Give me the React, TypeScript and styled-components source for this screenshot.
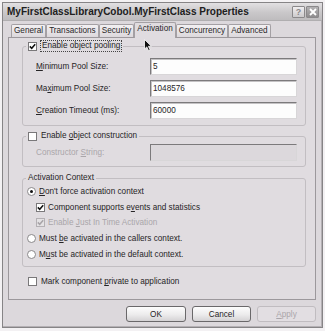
import React from "react";
import styled, { createGlobalStyle } from "styled-components";

const GlobalStyle = createGlobalStyle`
  html, body {
    margin: 0;
    padding: 0;
    background: #f3f1f3;
  }
  body {
    font-family: "Liberation Sans", Arial, sans-serif;
    font-size: 8.2px;
    color: #262426;
  }
`;

const Window = styled.div`
  position: relative;
  box-sizing: border-box;
  margin: 2px 0 0 2px;
  width: 321px;
  height: 326px;
  background: #dcd8dc;
  border: 1px solid #868486;
  box-shadow: inset -1px -1px 0 #b4b0b4;
  display: flex;
  flex-direction: column;
`;

const TitleBar = styled.div`
  height: 18px;
  flex: none;
  display: flex;
  align-items: center;
  justify-content: space-between;
  padding: 0 3px 0 4px;
  background: linear-gradient(#e2e0e2, #cac8ca 55%, #bebcbe);
  border-bottom: 1px solid #b0aeb0;
  box-sizing: border-box;
`;

const Title = styled.span`
  font-size: 10px;
  font-weight: bold;
  color: #202020;
`;

const TitleButtons = styled.div`
  display: flex;
  gap: 1px;
`;

const TitleButton = styled.div<{ $close?: boolean }>`
  width: 13px;
  height: 12px;
  box-sizing: border-box;
  border: 1px solid #8a888a;
  border-radius: 1px;
  background: ${(p) =>
    p.$close ? "linear-gradient(#b4b2b4, #8e8c8e)" : "linear-gradient(#f0eef0, #cccacc)"};
  display: flex;
  align-items: center;
  justify-content: center;
  font-size: 9px;
  font-weight: bold;
  color: #8a888a;
`;

const Body = styled.div`
  flex: 1;
  display: flex;
  flex-direction: column;
  padding: 1px 6px 0 5px;
`;

const TabStrip = styled.div`
  position: relative;
  z-index: 1;
  height: 16px;
  margin-bottom: -1px;
  padding-left: 3px;
  display: flex;
  align-items: flex-start;
`;

const Tab = styled.div<{ $active?: boolean }>`
  box-sizing: border-box;
  height: ${(p) => (p.$active ? "16px" : "13px")};
  margin-top: ${(p) => (p.$active ? "0" : "2px")};
  padding: 0 2px;
  line-height: 12px;
  border: 1px solid #a4a0a4;
  border-bottom: none;
  border-radius: 2px 2px 0 0;
  background: ${(p) => (p.$active ? "#e0dce0" : "linear-gradient(#f2f0f2, #dcd8dc)")};
  color: #2a282a;
  white-space: nowrap;
`;

const Panel = styled.div`
  box-sizing: border-box;
  height: 263px;
  border: 1px solid #9c989c;
  background: #e0dce0;
  padding: 2px 9px 0 13px;
  display: flex;
  flex-direction: column;
`;

const Group = styled.fieldset<{ $top: number }>`
  margin: ${(p) => p.$top}px 0 0 0;
  padding: 0;
  min-width: 0;
  border: 1px solid #c2bec2;
  border-radius: 3px;
`;

const Legend = styled.legend`
  display: flex;
  align-items: center;
  gap: 4px;
  height: 12px;
  margin-left: 3px;
  padding: 0 2px;
  line-height: 12px;
`;

const FieldGrid = styled.div<{ $pt: number; $pb: number }>`
  display: grid;
  grid-template-columns: 114px 147px;
  grid-auto-rows: 17px;
  row-gap: 5px;
  align-items: center;
  padding: ${(p) => p.$pt}px 8px ${(p) => p.$pb}px 13px;
`;

const FieldLabel = styled.span<{ $disabled?: boolean }>`
  color: ${(p) => (p.$disabled ? "#aaa6aa" : "#262426")};
`;

const TextBox = styled.div<{ $disabled?: boolean }>`
  box-sizing: border-box;
  height: 17px;
  padding: 1px 2px;
  line-height: 13px;
  background: ${(p) => (p.$disabled ? "#dcd8dc" : "#fdfdfd")};
  border: 1px solid;
  border-color: #7c7a7c #d8d6d8 #d8d6d8 #7c7a7c;
  box-shadow: ${(p) => (p.$disabled ? "none" : "inset 1px 1px 0 #c4c2c4")};
`;

const Options = styled.div`
  display: flex;
  flex-direction: column;
  padding: 0 0 4px 4px;
`;

const OptionRow = styled.div<{ $indent?: boolean; $disabled?: boolean }>`
  height: 15.6px;
  display: flex;
  align-items: center;
  gap: 3px;
  padding-left: ${(p) => (p.$indent ? "9px" : "0")};
  color: ${(p) => (p.$disabled ? "#aaa6aa" : "#262426")};
`;

const Box = styled.span<{ $disabled?: boolean }>`
  box-sizing: border-box;
  width: 9px;
  height: 9px;
  flex: none;
  border: 1px solid ${(p) => (p.$disabled ? "#b4b0b4" : "#7a787a")};
  background: ${(p) => (p.$disabled ? "#e4e2e4" : "#ffffff")};
  display: flex;
  align-items: center;
  justify-content: center;
`;

const Radio = styled.span<{ $on?: boolean }>`
  box-sizing: border-box;
  width: 9px;
  height: 9px;
  flex: none;
  border-radius: 50%;
  border: 1px solid #8a888a;
  background: #ffffff;
  display: flex;
  align-items: center;
  justify-content: center;
  &::after {
    content: "";
    width: 3px;
    height: 3px;
    border-radius: 50%;
    background: ${(p) => (p.$on ? "#111" : "transparent")};
  }
`;

const Focus = styled.span`
  outline: 1px dotted #444;
  outline-offset: 0;
  padding: 0 1px;
  line-height: 10px;
`;

const U = styled.span`
  text-decoration: underline;
`;

const PrivateRow = styled.div`
  height: 14px;
  margin: 8px 0 0 6px;
  display: flex;
  align-items: center;
  gap: 4px;
`;

const ButtonRow = styled.div`
  display: flex;
  justify-content: flex-end;
  gap: 6px;
  margin-top: 6px;
`;

const Button = styled.div<{ $w: number; $disabled?: boolean }>`
  box-sizing: border-box;
  width: ${(p) => p.$w}px;
  height: 16px;
  border: 1px solid ${(p) => (p.$disabled ? "#c0bcc0" : "#6a686a")};
  border-radius: 3px;
  background: ${(p) =>
    p.$disabled ? "#e2dee2" : "linear-gradient(#fdfdfd, #ecebec 55%, #d4d2d4)"};
  color: ${(p) => (p.$disabled ? "#aaa6aa" : "#262426")};
  display: flex;
  align-items: center;
  justify-content: center;
`;

const Cursor = styled.svg`
  position: absolute;
  left: 141px;
  top: 36px;
`;

function Check({ disabled }: { disabled?: boolean }) {
  return (
    <svg width="7" height="7" viewBox="0 0 7 7">
      <path
        d="M0.8 3.4 L2.7 5.3 L6.2 1.2"
        fill="none"
        stroke={disabled ? "#a8a4a8" : "#111"}
        strokeWidth="1.5"
      />
    </svg>
  );
}

export default function App() {
  return (
    <>
      <GlobalStyle />
      <Window>
        <TitleBar>
          <Title>MyFirstClassLibraryCobol.MyFirstClass Properties</Title>
          <TitleButtons>
            <TitleButton>?</TitleButton>
            <TitleButton $close>
              <svg width="8" height="8" viewBox="0 0 8 8">
                <path d="M1 1 L7 7 M7 1 L1 7" stroke="#ffffff" strokeWidth="1.8" />
              </svg>
            </TitleButton>
          </TitleButtons>
        </TitleBar>
        <Body>
          <TabStrip>
            <Tab>General</Tab>
            <Tab>Transactions</Tab>
            <Tab>Security</Tab>
            <Tab $active>Activation</Tab>
            <Tab>Concurrency</Tab>
            <Tab>Advanced</Tab>
          </TabStrip>
          <Panel>
            <Group $top={0}>
              <Legend>
                <Box>
                  <Check />
                </Box>
                <Focus>Enable object pooling</Focus>
              </Legend>
              <FieldGrid $pt={6} $pb={6}>
                <FieldLabel>
                  <U>M</U>inimum Pool Size:
                </FieldLabel>
                <TextBox>5</TextBox>
                <FieldLabel>
                  Ma<U>x</U>imum Pool Size:
                </FieldLabel>
                <TextBox>1048576</TextBox>
                <FieldLabel>
                  <U>C</U>reation Timeout (ms):
                </FieldLabel>
                <TextBox>60000</TextBox>
              </FieldGrid>
            </Group>

            <Group $top={4}>
              <Legend>
                <Box />
                <span>
                  Enable <U>o</U>bject construction
                </span>
              </Legend>
              <FieldGrid $pt={2} $pb={5}>
                <FieldLabel $disabled>
                  Constructor <U>S</U>tring:
                </FieldLabel>
                <TextBox $disabled />
              </FieldGrid>
            </Group>

            <Group $top={5}>
              <Legend>Activation Context</Legend>
              <Options>
                <OptionRow>
                  <Radio $on />
                  <span>
                    <U>D</U>on't force activation context
                  </span>
                </OptionRow>
                <OptionRow $indent>
                  <Box>
                    <Check />
                  </Box>
                  <span>
                    Component supports e<U>v</U>ents and statistics
                  </span>
                </OptionRow>
                <OptionRow $indent $disabled>
                  <Box $disabled>
                    <Check disabled />
                  </Box>
                  <span>
                    Enable <U>J</U>ust In Time Activation
                  </span>
                </OptionRow>
                <OptionRow>
                  <Radio />
                  <span>
                    Must <U>b</U>e activated in the callers context.
                  </span>
                </OptionRow>
                <OptionRow>
                  <Radio />
                  <span>
                    M<U>u</U>st be activated in the default context.
                  </span>
                </OptionRow>
              </Options>
            </Group>

            <PrivateRow>
              <Box />
              <span>
                Mark component <U>p</U>rivate to application
              </span>
            </PrivateRow>
          </Panel>
          <ButtonRow>
            <Button $w={60}>OK</Button>
            <Button $w={59}>Cancel</Button>
            <Button $w={59} $disabled>
              <span>
                <U>A</U>pply
              </span>
            </Button>
          </ButtonRow>
        </Body>
        <Cursor width="9" height="13" viewBox="0 0 9 13">
          <path
            d="M0.5 0.5 L0.5 10 L2.8 7.9 L4.6 11.8 L6.2 11.1 L4.4 7.3 L7.4 7.3 Z"
            fill="#111"
            stroke="#ffffff"
            strokeWidth="0.8"
          />
        </Cursor>
      </Window>
    </>
  );
}
